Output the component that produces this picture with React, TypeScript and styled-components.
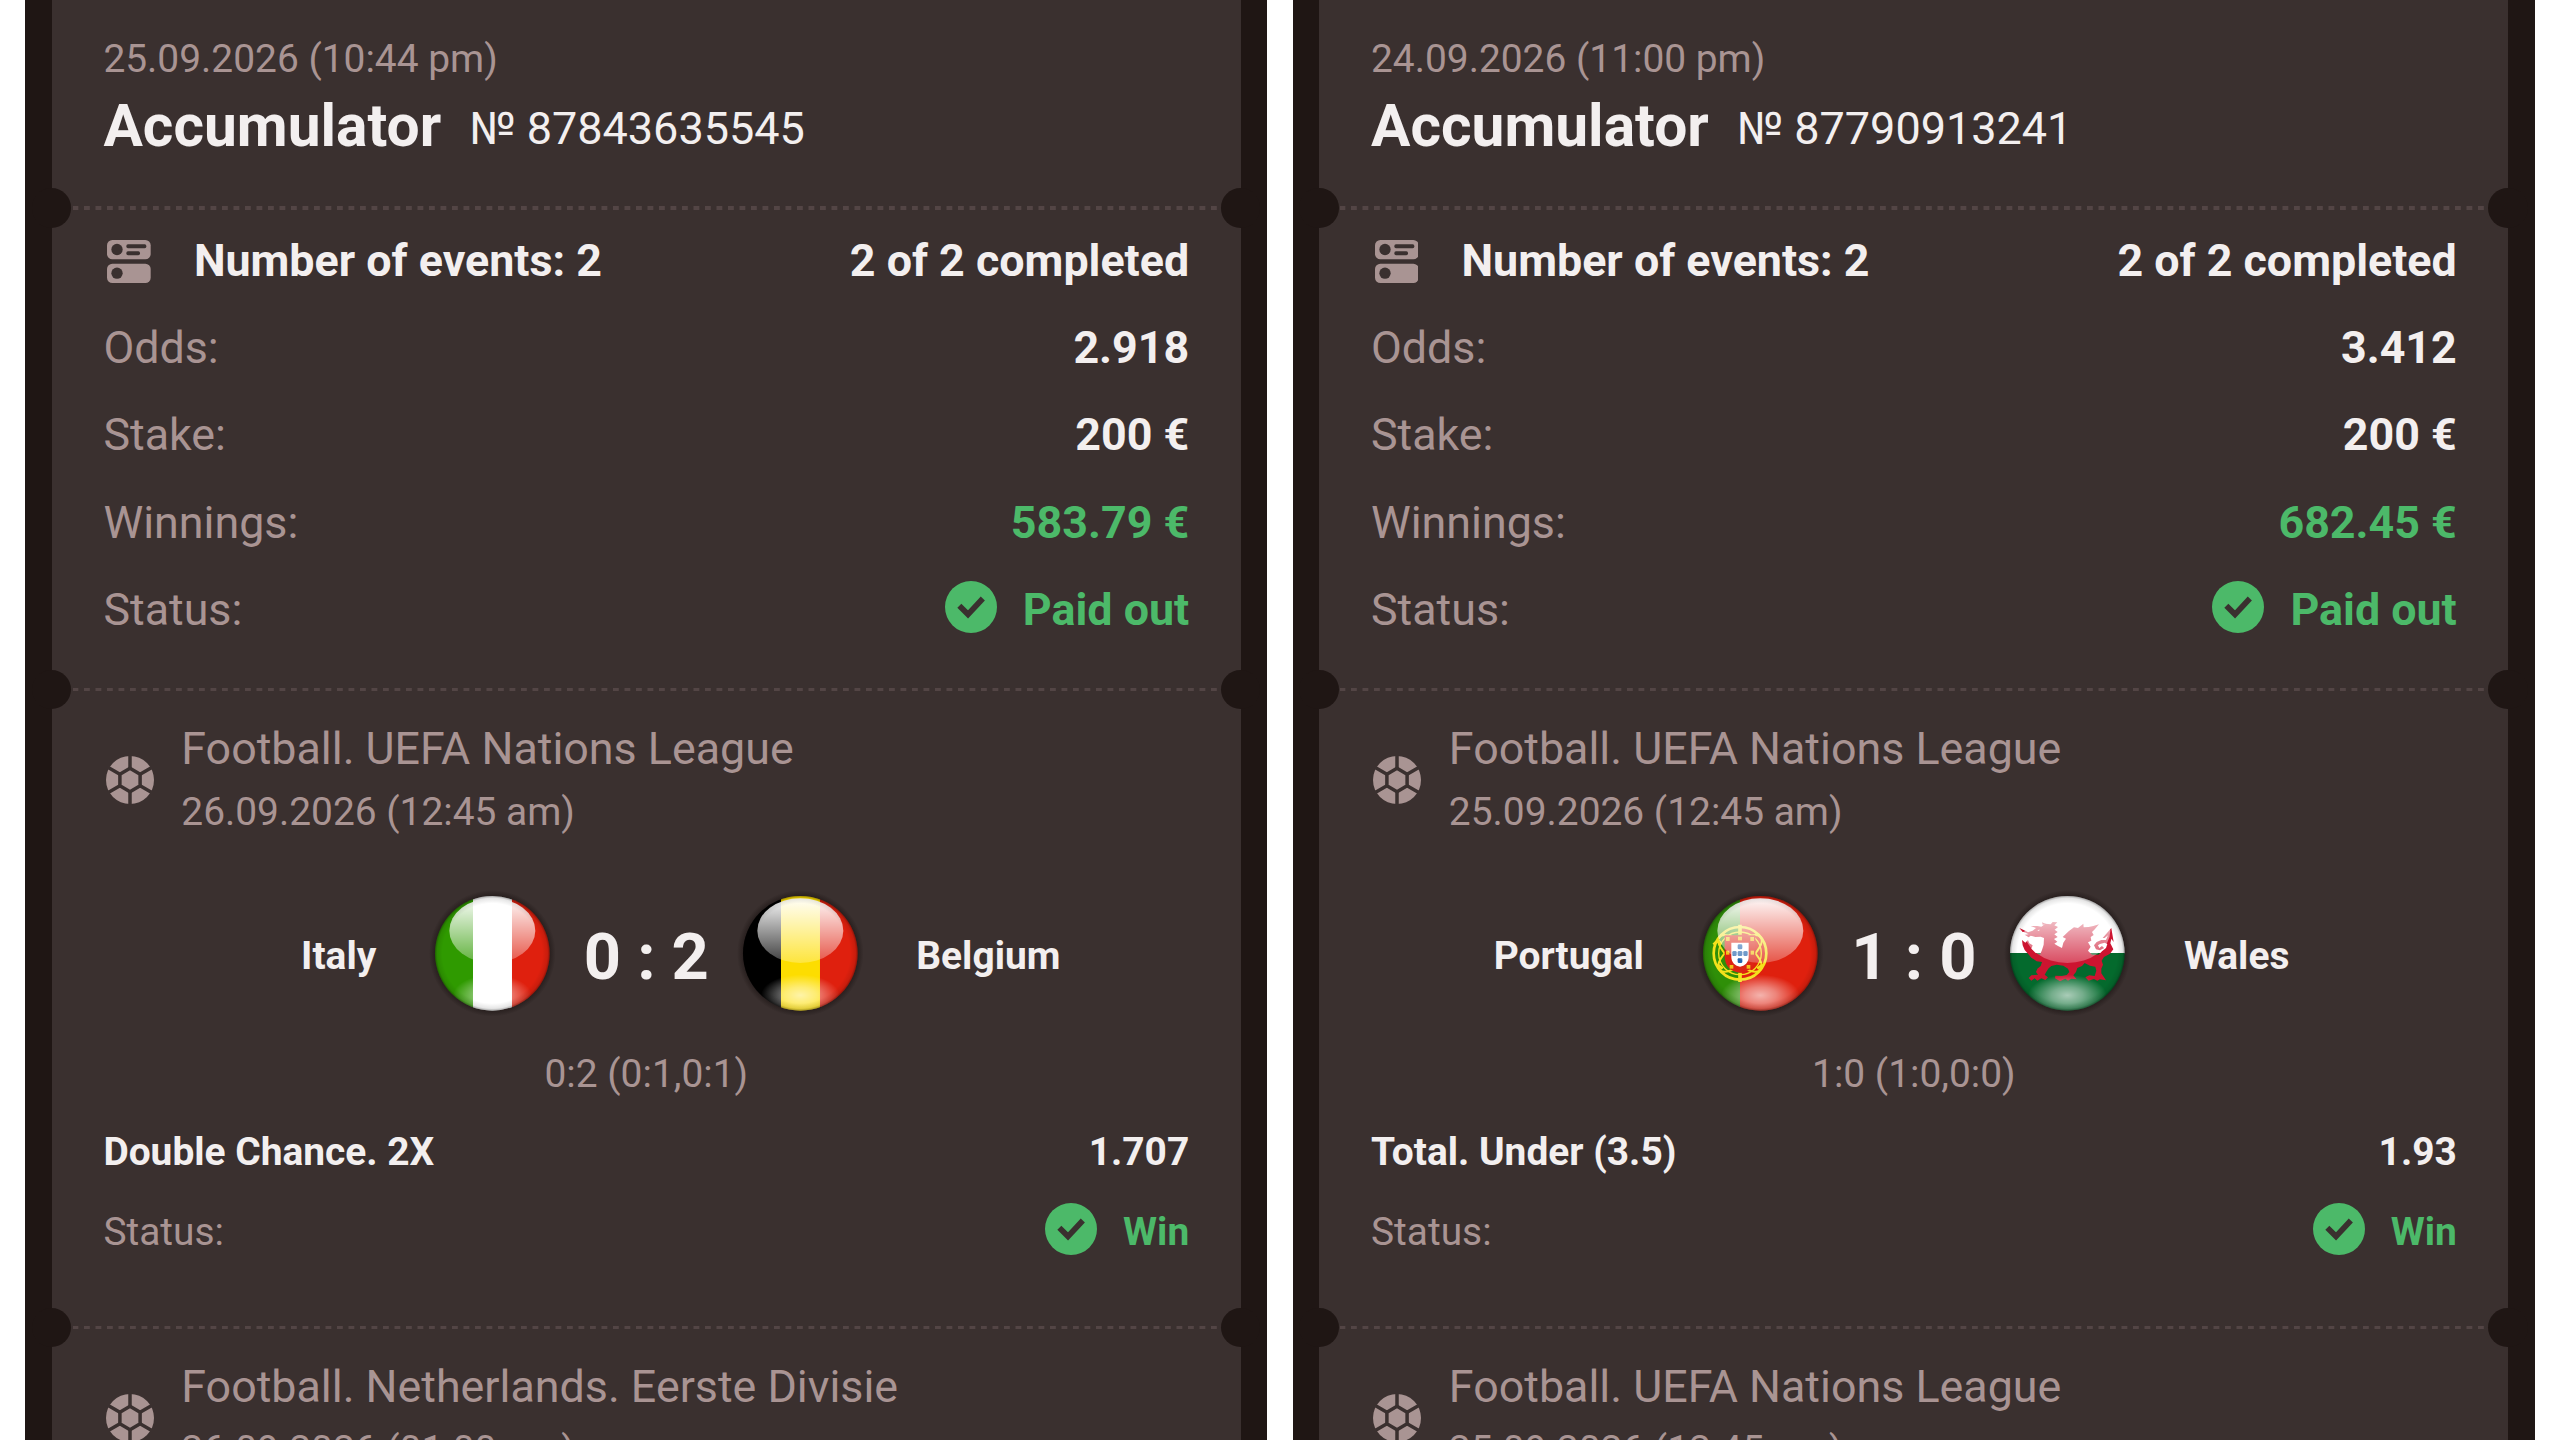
import React, { ReactNode } from "react";
import styled, { createGlobalStyle } from "styled-components";

const color = {
  card: "#3a302f",
  edge: "#1f1614",
  muted: "#a99493",
  text: "#f3efef",
  green: "#4cb969",
  dash: "#534545",
};

const GlobalStyle = createGlobalStyle`
  * { box-sizing: border-box; }
  html, body { margin: 0; background: #fff; overflow: hidden; }
  body { font-family: Roboto, "Liberation Sans", sans-serif; }
`;

const Page = styled.main`
  display: flex;
  gap: 25.4px;
  width: 2560px;
  height: 1440px;
  padding: 0 25px;
  overflow: hidden;
  background: #fff;
`;

const Panel = styled.div`
  flex: 0 0 1242.2px;
  height: 1440px;
  padding: 0 26.6px;
  overflow: hidden;
  background: ${color.edge};
`;

const Ticket = styled.article`
  background: ${color.card};
`;

const Section = styled.section<{ $height: number; $top: number; $divided?: boolean }>`
  position: relative;
  display: flex;
  flex-direction: column;
  height: ${(p) => p.$height}px;
  padding: ${(p) => p.$top}px 51.4px 0 51.8px;
  ${(p) =>
    p.$divided &&
    `
    &::before, &::after {
      content: "";
      position: absolute;
      top: -19.6px;
      width: 39.4px;
      height: 39.4px;
      border-radius: 50%;
      background: ${color.edge};
    }
    &::before { left: -19.7px; }
    &::after { right: -19.7px; }
  `}
`;

const Perforation = styled.div`
  position: absolute;
  top: -1.8px;
  left: 21.3px;
  right: 19px;
  height: 3.6px;
  background: repeating-linear-gradient(90deg, ${color.dash} 0 4.8px, transparent 5.8px 10.5px, ${color.dash} 11.5px);
`;

const Stamp = styled.div<{ $line: number }>`
  color: ${color.muted};
  font-size: 38.9px;
  line-height: ${(p) => p.$line}px;
  white-space: nowrap;
`;

const TitleRow = styled.div`
  display: flex;
  align-items: baseline;
  gap: 28px;
  color: ${color.text};
  line-height: 74px;
`;

const Title = styled.h1`
  margin: 0;
  font-size: 58.7px;
  font-weight: 700;
`;

const TicketNumber = styled.span`
  position: relative;
  top: -2px;
  font-size: 45px;
`;

const Row = styled.div<{ $small?: boolean }>`
  display: flex;
  align-items: center;
  justify-content: space-between;
  height: ${(p) => (p.$small ? 79.3 : 87.35)}px;
  font-size: ${(p) => (p.$small ? 38.9 : 44.8)}px;
  white-space: nowrap;
`;

const Label = styled.span`
  color: ${color.muted};
`;

const Strong = styled.span<{ $green?: boolean }>`
  color: ${(p) => (p.$green ? color.green : color.text)};
  font-weight: 700;
`;

const EventsLabel = styled.div`
  display: flex;
  align-items: center;
  gap: 43px;
  padding-left: 3.8px;
  svg { margin-top: 2px; }
`;

const Status = styled.div`
  display: flex;
  align-items: center;
  gap: 26px;
  svg { margin-top: -5px; }
`;

const LeagueHead = styled.header`
  display: flex;
  align-items: center;
  gap: 27.6px;
  padding-left: 2.3px;
  svg { margin-top: -1px; }
`;

const League = styled.div`
  color: ${color.muted};
  font-size: 44.8px;
  line-height: 62px;
  white-space: nowrap;
`;

const Match = styled.div`
  display: grid;
  grid-template-columns: 1fr auto 1fr;
  align-items: center;
  gap: 53px;
  height: 198.2px;
`;

const Team = styled.div<{ $home?: boolean }>`
  padding-top: 26px;
  color: ${color.text};
  font-size: 38.9px;
  font-weight: 700;
  text-align: ${(p) => (p.$home ? "right" : "left")};
`;

const Board = styled.div`
  display: flex;
  align-items: center;
  justify-content: space-between;
  width: 434px;
  padding-top: 21px;
`;

const Score = styled.div`
  padding-top: 7px;
  color: ${color.text};
  font-size: 65px;
  font-weight: 700;
  white-space: nowrap;
`;

const Halves = styled.div`
  height: 70.4px;
  color: ${color.muted};
  font-size: 38.9px;
  line-height: 64px;
  text-align: center;
`;

const EventsIcon = () => (
  <svg width="43.7" height="43" viewBox="0 0 131 129">
    <g fill={color.muted}>
      <rect width="131" height="58" rx="16" />
      <rect y="71" width="131" height="58" rx="16" />
    </g>
    <g fill={color.card}>
      <circle cx="30" cy="28.5" r="17" />
      <circle cx="30" cy="99.5" r="17" />
      <rect x="58" y="13" width="60" height="11.5" rx="5" />
      <rect x="58" y="34" width="41" height="11.5" rx="5" />
    </g>
  </svg>
);

const BallIcon = () => (
  <svg width="48" height="48" viewBox="-72 -72 144 144">
    <circle r="72" fill={color.muted} />
    <g fill="none" stroke={color.card} strokeWidth="10.5">
      <path d="M0-35 30.3-17.5V17.5L0 35-30.3 17.5V-17.5Z" />
      <path d="M0-35V-74M30.3-17.5 64-37M30.3 17.5 64 37M0 35V74M-30.3 17.5-64 37M-30.3-17.5-64-37" />
    </g>
  </svg>
);

const CheckIcon = () => (
  <svg width="52" height="52" viewBox="0 0 156 156">
    <circle cx="78" cy="78" r="78" fill={color.green} />
    <path d="M43 74 69 100 113.5 52.5" fill="none" stroke={color.card} strokeWidth="17" />
  </svg>
);

const Italy = () => (
  <>
    <rect x="-180" y="-180" width="123" height="360" fill="#2f9a00" />
    <rect x="-58" y="-180" width="117" height="360" fill="#fff" />
    <rect x="59" y="-180" width="123" height="360" fill="#df200e" />
  </>
);

const Belgium = () => (
  <>
    <rect x="-180" y="-180" width="123" height="360" fill="#000" />
    <rect x="-58" y="-180" width="117" height="360" fill="#fddd00" />
    <rect x="59" y="-180" width="123" height="360" fill="#df200e" />
  </>
);

const Portugal = () => (
  <>
    <rect x="-180" y="-180" width="120" height="360" fill="#2f8f08" />
    <rect x="-61" y="-180" width="242" height="360" fill="#df200e" />
    <g transform="translate(-61 0)" fill="none" stroke="#f4e21c">
      <circle r="79" strokeWidth="8" />
      <circle r="64" strokeWidth="4" />
      <ellipse rx="79" ry="32" strokeWidth="6" transform="rotate(38)" />
      <ellipse rx="79" ry="32" strokeWidth="6" transform="rotate(-38)" />
      <path d="M0-86V-56M0 58V86" strokeWidth="11" />
      <path d="M-79-26Q-62-46-58-26M-68 34-52 46M68 34 52 46" strokeWidth="9" />
    </g>
    <g transform="translate(-61 0)">
      <path d="M-46-54H46V8C46 40 26 56 0 58-26 56-46 40-46 8Z" fill="#dc2414" />
      <path d="M-26-32H26V10C26 28 14 38 0 40-14 38-26 28-26 10Z" fill="#fff" />
      <g fill="#2565ad">
        <rect x="-7" y="-27" width="14" height="15" rx="4" />
        <rect x="-7" y="-7" width="14" height="15" rx="4" />
        <rect x="-7" y="14" width="14" height="15" rx="4" />
        <rect x="-23" y="-7" width="13" height="15" rx="4" />
        <rect x="10" y="-7" width="13" height="15" rx="4" />
      </g>
      <g fill="#f2c31b">
        <rect x="-42" y="-49" width="11" height="12" />
        <rect x="-6" y="-50" width="12" height="11" />
        <rect x="31" y="-49" width="11" height="12" />
        <rect x="-42" y="-8" width="10" height="12" />
        <rect x="32" y="-8" width="10" height="12" />
        <rect x="-31" y="35" width="11" height="11" />
        <rect x="20" y="35" width="11" height="11" />
      </g>
    </g>
  </>
);

const Wales = () => (
  <>
    <rect x="-180" y="-180" width="360" height="180" fill="#fff" />
    <rect x="-180" y="-1" width="360" height="181" fill="#046a2d" />
    <g transform="translate(-202 -206)" fill="#cd1430" stroke="none">
      <path
        d="M66 139 74 137 84 143 98 138 108 130 92 124 112 124 124 126 136 117 152 119 158 112 172 113 163 122
           174 127 164 135 173 142 163 149 173 157 162 163 172 171 163 177 174 184 186 190
           190 174 198 162 188 157 206 140 222 128 234 130 250 117 251 128 266 127 280 124 297 119 283 135
           276 142 281 151 272 157 274 168 264 173 272 186 264 198 276 210 296 210 306 200
           318 190 322 178 314 174 300 178 294 182 298 190 306 184 312 190 300 197 288 194 282 182
           290 172 304 166 318 166 324 152 314 160 308 160 334 130 341 172 334 162 331 176 340 194
           330 207 312 217 305 228 309 240 304 252 304 266 315 282 318 287 300 284 292 288 282 283
           266 288 256 278 268 272 284 274 289 258 286 246 270 243 254 235 246 244 232 250 228 262 220 272
           230 284 214 282 204 288 196 282 180 290 165 281 166 273 186 274 200 271 208 262 204 252 190 243
           170 240 154 244 146 251 140 260 134 270 144 278 136 286 124 281 112 288 104 281 94 288 86 280 94 272
           114 270 108 262 112 252 122 244 126 232 110 230 94 219 84 207 74 196 68 182 66 166 76 174 84 166 88 176
           98 182 94 192 106 204 120 210 126 196 131 180 132 160 122 156 106 157 92 153 86 158 74 150 86 149Z"
      />
      <path d="M68 142 58 130 76 138ZM128 120 126 113 140 119Z" />
      <path d="M112 136 120 135 116 139Z" fill="#fff" />
    </g>
  </>
);

const flags: Record<string, () => ReactNode> = { Italy, Belgium, Portugal, Wales };

const FlagSvg = styled.svg`
  display: block;
  width: 126.67px;
  height: 126.67px;
`;

const Flag = ({ name }: { name: string }) => {
  const Art = flags[name] as React.FC;
  const id = (part: string) => `${name}-${part}`;
  return (
    <FlagSvg viewBox="-190 -190 380 380">
      <defs>
        <clipPath id={id("disc")}>
          <circle r="172" />
        </clipPath>
        <linearGradient id={id("gloss")} x1="0" y1="0" x2="0" y2="1">
          <stop offset="0" stopColor="#fff" stopOpacity="0.97" />
          <stop offset="1" stopColor="#fff" stopOpacity="0.24" />
        </linearGradient>
        <radialGradient id={id("glow")}>
          <stop offset="0" stopColor="#fff" stopOpacity="0.66" />
          <stop offset="0.4" stopColor="#fff" stopOpacity="0.45" />
          <stop offset="1" stopColor="#fff" stopOpacity="0" />
        </radialGradient>
        <radialGradient id={id("rim")}>
          <stop offset="0.86" stopColor="#000" stopOpacity="0" />
          <stop offset="0.95" stopColor="#000" stopOpacity="0.1" />
          <stop offset="1" stopColor="#000" stopOpacity="0.42" />
        </radialGradient>
        <radialGradient id={id("shadow")}>
          <stop offset="0.88" stopColor="#120b0a" stopOpacity="0.55" />
          <stop offset="1" stopColor="#120b0a" stopOpacity="0" />
        </radialGradient>
      </defs>
      <circle r="190" fill={`url(#${id("shadow")})`} />
      <g clipPath={`url(#${id("disc")})`}>
        <Art />
        <ellipse cy="126" rx="118" ry="62" fill={`url(#${id("glow")})`} />
        <ellipse cy="-68" rx="129" ry="97" fill={`url(#${id("gloss")})`} />
        <circle r="174" fill={`url(#${id("rim")})`} />
      </g>
    </FlagSvg>
  );
};

interface Bet {
  league: string;
  date: string;
  home?: string;
  away?: string;
  score?: string;
  halves?: string;
  market?: string;
  odds?: string;
}

interface TicketData {
  date: string;
  number: string;
  odds: string;
  winnings: string;
  bets: Bet[];
}

const tickets: TicketData[] = [
  {
    date: "25.09.2026 (10:44 pm)",
    number: "87843635545",
    odds: "2.918",
    winnings: "583.79 €",
    bets: [
      {
        league: "Football. UEFA Nations League",
        date: "26.09.2026 (12:45 am)",
        home: "Italy",
        away: "Belgium",
        score: "0 : 2",
        halves: "0:2 (0:1,0:1)",
        market: "Double Chance. 2X",
        odds: "1.707",
      },
      { league: "Football. Netherlands. Eerste Divisie", date: "26.09.2026 (01:00 am)" },
    ],
  },
  {
    date: "24.09.2026 (11:00 pm)",
    number: "87790913241",
    odds: "3.412",
    winnings: "682.45 €",
    bets: [
      {
        league: "Football. UEFA Nations League",
        date: "25.09.2026 (12:45 am)",
        home: "Portugal",
        away: "Wales",
        score: "1 : 0",
        halves: "1:0 (1:0,0:0)",
        market: "Total. Under (3.5)",
        odds: "1.93",
      },
      { league: "Football. UEFA Nations League", date: "25.09.2026 (12:45 am)" },
    ],
  },
];

const BetSection = ({ bet }: { bet: Bet }) => (
  <Section $height={638} $top={28.2} $divided>
    <Perforation />
    <LeagueHead>
      <BallIcon />
      <div>
        <League>{bet.league}</League>
        <Stamp $line={63.8}>{bet.date}</Stamp>
      </div>
    </LeagueHead>
    {bet.home && bet.away && (
      <>
        <Match>
          <Team $home>{bet.home}</Team>
          <Board>
            <Flag name={bet.home} />
            <Score>{bet.score}</Score>
            <Flag name={bet.away} />
          </Board>
          <Team>{bet.away}</Team>
        </Match>
        <Halves>{bet.halves}</Halves>
        <Row $small>
          <Strong>{bet.market}</Strong>
          <Strong>{bet.odds}</Strong>
        </Row>
        <Row $small>
          <Label>Status:</Label>
          <Status>
            <CheckIcon />
            <Strong $green>Win</Strong>
          </Status>
        </Row>
      </>
    )}
  </Section>
);

export default function App() {
  return (
    <>
      <GlobalStyle />
      <Page>
        {tickets.map((t) => (
          <Panel key={t.number}>
            <Ticket>
              <Section $height={207.8} $top={29.2}>
                <Stamp $line={60}>{t.date}</Stamp>
                <TitleRow>
                  <Title>Accumulator</Title>
                  <TicketNumber>№ {t.number}</TicketNumber>
                </TitleRow>
              </Section>
              <Section $height={481.9} $top={8.8} $divided>
                <Perforation />
                <Row>
                  <EventsLabel>
                    <EventsIcon />
                    <Strong>Number of events: 2</Strong>
                  </EventsLabel>
                  <Strong>2 of 2 completed</Strong>
                </Row>
                <Row>
                  <Label>Odds:</Label>
                  <Strong>{t.odds}</Strong>
                </Row>
                <Row>
                  <Label>Stake:</Label>
                  <Strong>200 €</Strong>
                </Row>
                <Row>
                  <Label>Winnings:</Label>
                  <Strong $green>{t.winnings}</Strong>
                </Row>
                <Row>
                  <Label>Status:</Label>
                  <Status>
                    <CheckIcon />
                    <Strong $green>Paid out</Strong>
                  </Status>
                </Row>
              </Section>
              {t.bets.map((bet, i) => (
                <BetSection key={i} bet={bet} />
              ))}
            </Ticket>
          </Panel>
        ))}
      </Page>
    </>
  );
}
